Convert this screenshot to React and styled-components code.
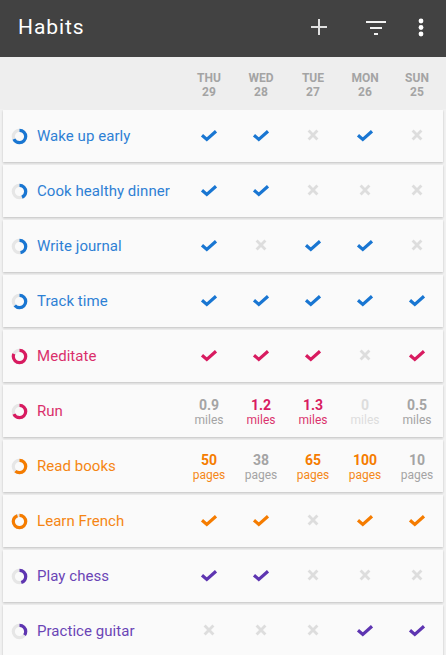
import React from "react";
import styled, { createGlobalStyle } from "styled-components";

const GlobalStyle = createGlobalStyle`
  html, body {
    margin: 0;
    padding: 0;
    height: 655px;
    overflow: hidden;
    background: #f1f1f1;
    font-family: Roboto, "Liberation Sans", sans-serif;
  }
`;

const colors = {
  blue: "#1976d2",
  pink: "#d81b60",
  orange: "#f57c00",
  purple: "#5e35b1",
};

const Toolbar = styled.header`
  height: 57px;
  background: #424242;
  display: flex;
  align-items: center;
  padding: 0 8px 3px 18px;
  box-sizing: border-box;
`;

const Title = styled.h1`
  flex: 1;
  margin: 0;
  color: #fff;
  font-size: 21px;
  font-weight: 400;
  letter-spacing: 0.9px;
`;

const ToolbarIcon = styled.div`
  width: ${({ $w }) => $w}px;
  display: flex;
  justify-content: center;
`;

const DayHeader = styled.div`
  height: 52px;
  background: #eeeeee;
  display: flex;
  justify-content: flex-end;
  padding-right: 3px;
  box-sizing: border-box;
`;

const DayCell = styled.div`
  width: 52px;
  padding-top: 14px;
  box-sizing: border-box;
  text-align: center;
  color: #a4a4a4;
  font-size: 12px;
  font-weight: 700;
  line-height: 14px;
`;

const List = styled.div`
  display: flex;
  flex-direction: column;
  gap: 3px;
  padding: 1px 3px 0;
`;

const Card = styled.div`
  height: 52px;
  flex: none;
  background: #fafafa;
  box-shadow: 0 1px 2px rgba(0, 0, 0, 0.2);
  display: flex;
  align-items: center;
`;

const Name = styled.div`
  flex: 1;
  display: flex;
  align-items: center;
  gap: 9px;
  padding-left: 8px;
  color: ${({ $color }) => $color};
  font-size: 15px;
  letter-spacing: 0.05px;
  white-space: nowrap;
`;

const NameText = styled.span`
  opacity: 0.92;
`;

const Cell = styled.div`
  width: 52px;
  display: flex;
  flex-direction: column;
  align-items: center;
  justify-content: center;
  padding-top: ${({ $text }) => ($text ? 3 : 0)}px;
  padding-bottom: ${({ $text }) => ($text ? 0 : 2)}px;
  color: ${({ $color }) => $color};
`;

const Amount = styled.span`
  font-size: 14px;
  font-weight: 700;
  line-height: 15px;
`;

const Unit = styled.span`
  font-size: 12px;
  line-height: 15px;
  opacity: ${({ $on }) => ($on ? 0.9 : 1)};
`;

const Ring = ({ value, color }) => {
  const r = 6.2;
  const c = 2 * Math.PI * r;
  return (
    <svg width="17" height="17" viewBox="0 0 17 17">
      <circle cx="8.5" cy="8.5" r={r} fill="none" stroke="#e6e6e6" strokeWidth="3.2" />
      <circle
        cx="8.5"
        cy="8.5"
        r={r}
        fill="none"
        stroke={color}
        strokeWidth="3.2"
        strokeDasharray={`${c * value} ${c}`}
        transform="rotate(-90 8.5 8.5)"
      />
    </svg>
  );
};

const CheckMark = () => (
  <svg width="18" height="13" viewBox="0 0 18 13" fill="none" stroke="currentColor" strokeWidth="3.2">
    <path d="M2 6.2l4.8 4.2L16 2.2" />
  </svg>
);

const CrossMark = () => (
  <svg width="12" height="12" viewBox="0 0 12 12" stroke="currentColor" strokeWidth="2.8" fill="none">
    <path d="M1.6 1.6l8.8 8.8M10.4 1.6l-8.8 8.8" />
  </svg>
);

const habits = [
  { name: "Wake up early", color: colors.blue, ring: 0.66, days: [1, 1, 0, 1, 0] },
  { name: "Cook healthy dinner", color: colors.blue, ring: 0.42, days: [1, 1, 0, 0, 0] },
  { name: "Write journal", color: colors.blue, ring: 0.46, days: [1, 0, 1, 1, 0] },
  { name: "Track time", color: colors.blue, ring: 0.62, days: [1, 1, 1, 1, 1] },
  { name: "Meditate", color: colors.pink, ring: 0.8, days: [1, 1, 1, 0, 1] },
  {
    name: "Run",
    color: colors.pink,
    ring: 0.66,
    unit: "miles",
    values: [
      ["0.9", 0],
      ["1.2", 1],
      ["1.3", 1],
      ["0", -1],
      ["0.5", 0],
    ],
  },
  {
    name: "Read books",
    color: colors.orange,
    ring: 0.6,
    unit: "pages",
    values: [
      ["50", 1],
      ["38", 0],
      ["65", 1],
      ["100", 1],
      ["10", 0],
    ],
  },
  { name: "Learn French", color: colors.orange, ring: 0.92, days: [1, 1, 0, 1, 1] },
  { name: "Play chess", color: colors.purple, ring: 0.44, days: [1, 1, 0, 0, 0] },
  { name: "Practice guitar", color: colors.purple, ring: 0.34, days: [0, 0, 0, 1, 1] },
];

const dayLabels = [
  ["THU", 29],
  ["WED", 28],
  ["TUE", 27],
  ["MON", 26],
  ["SUN", 25],
];

const App = () => {
  return (
    <>
      <GlobalStyle />
      <Toolbar>
        <Title>Habits</Title>
        <ToolbarIcon $w={56}>
          <svg width="24" height="24" viewBox="0 0 24 24" fill="#e0e0e0">
            <path d="M11 4h2v7h7v2h-7v7h-2v-7H4v-2h7z" />
          </svg>
        </ToolbarIcon>
        <ToolbarIcon $w={57}>
          <svg width="24" height="24" viewBox="0 0 24 24" fill="#f2f2f2">
            <path d="M2 6h20v2H2zM6 12h12v2H6zM10 18h4v2h-4z" />
          </svg>
        </ToolbarIcon>
        <ToolbarIcon $w={34}>
          <svg width="24" height="24" viewBox="0 0 24 24" fill="#fff">
            <circle cx="12" cy="6" r="2.4" />
            <circle cx="12" cy="12.5" r="2.4" />
            <circle cx="12" cy="19" r="2.4" />
          </svg>
        </ToolbarIcon>
      </Toolbar>
      <DayHeader>
        {dayLabels.map(([day, date]) => (
          <DayCell key={day}>
            {day}
            <br />
            {date}
          </DayCell>
        ))}
      </DayHeader>
      <List>
        {habits.map((habit) => (
          <Card key={habit.name}>
            <Name $color={habit.color}>
              <Ring value={habit.ring} color={habit.color} />
              <NameText>{habit.name}</NameText>
            </Name>
            {habit.values
              ? habit.values.map(([amount, state], i) => (
                  <Cell
                    key={i}
                    $text
                    $color={state > 0 ? habit.color : state < 0 ? "#dddddd" : "#a4a4a4"}
                  >
                    <Amount>{amount}</Amount>
                    <Unit $on={state > 0}>{habit.unit}</Unit>
                  </Cell>
                ))
              : habit.days.map((done, i) => (
                  <Cell key={i} $color={done ? habit.color : "#dddddd"}>
                    {done ? <CheckMark /> : <CrossMark />}
                  </Cell>
                ))}
          </Card>
        ))}
      </List>
    </>
  );
};

export default App;
